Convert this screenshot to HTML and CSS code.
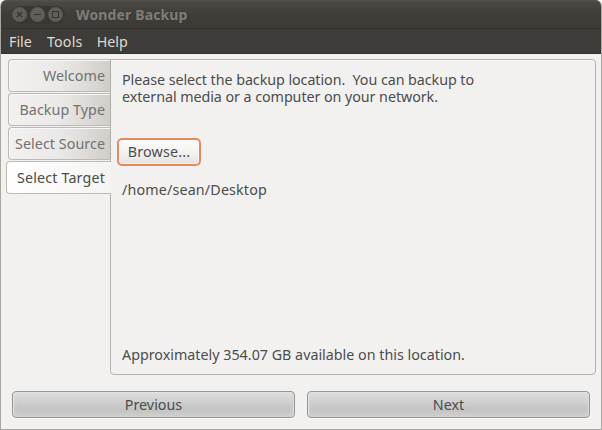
FILE: index.html
```html
<!DOCTYPE html>
<html lang="en">
<head>
<meta charset="utf-8">
<title>Wonder Backup</title>
<link rel="stylesheet" href="styles.css">
</head>
<body>
<div class="window">
  <header class="titlebar">
    <svg class="controls" width="54" height="18" viewBox="0 0 54 18">
      <rect x="0" y="0" width="54" height="18" rx="9" fill="#383732"/>
      <g fill="#605e58" stroke="#55534d">
        <circle cx="8.5" cy="8.5" r="7.2"/><circle cx="26.5" cy="8.5" r="7.2"/><circle cx="44.5" cy="8.5" r="7.2"/>
      </g>
      <g fill="none" stroke="#34332f">
        <path stroke-width="1.3" d="M6 6l5 5M11 6l-5 5"/>
        <path d="M23 8.5h7M41.500 5.500h6v6h-6z"/>
      </g>
    </svg>
    <h1 class="title">Wonder Backup</h1>
  </header>
  <nav class="menubar">
    <span class="menu">File</span><span class="menu tools">Tools</span><span class="menu">Help</span>
  </nav>
  <main class="content">
    <div class="tabs">
      <div class="tab">Welcome</div>
      <div class="tab">Backup Type</div>
      <div class="tab">Select Source</div>
      <div class="tab active">Select Target</div>
    </div>
    <section class="panel">
      <p class="intro">Please select the backup location.&nbsp; You can backup to<br>external media or a computer on your network.</p>
      <button class="browse">Browse...</button>
      <p class="path">/home/sean/Desktop</p>
      <p class="space">Approximately 354.07 GB available on this location.</p>
    </section>
  </main>
  <footer class="actions">
    <button class="action">Previous</button>
    <button class="action">Next</button>
  </footer>
</div>
</body>
</html>
```
FILE: styles.css
```css
* { box-sizing: border-box; }
body { margin: 0; background: #fff; }
.window {
  width: 602px; height: 430px;
  display: flex; flex-direction: column;
  border: 1px solid #aaa7a3; border-top: 0;
  border-radius: 6px 6px 0 0;
  overflow: hidden;
  background: #f2f1f0;
  color: #4c4c4c;
  font: 14.3px/17px "Noto Sans", sans-serif;
}
.titlebar {
  height: 28px; flex: none; margin: 0 -1px;
  display: flex; align-items: center;
  padding: 1px 0 0 11px;
  background: linear-gradient(#55534d 0, #4a4943 2px, #3e3d38 14px, #3c3b37 100%);
}
.title { margin: 1px 0 0 11px; font-size: 14px; line-height: 20px; font-weight: 700; letter-spacing: .14px; color: #807d78; }
.menubar {
  height: 26px; flex: none; margin: 0 -1px;
  display: flex; align-items: center; gap: 14px;
  padding: 1px 9px 0;
  border-top: 1px solid #33322e; border-bottom: 1px solid #32312d;
  background: #3d3c38; color: #dfdbd2;
}
.tools { margin-left: 1px; letter-spacing: .2px; }
.content { display: flex; height: 321px; flex: none; padding: 5px 5px 0; }
.tabs { width: 104px; flex: none; display: flex; flex-direction: column; align-items: flex-end; gap: 1px; z-index: 1; }
.tab {
  width: 103px; height: 33px; margin-right: -1px; padding: 0 5px 0 0;
  border: 1px solid #bcb9b6; border-right-color: #b0ada9;
  border-radius: 4px 0 0 4px;
  background: linear-gradient(90deg, #f2f1f0 0, #ebe9e7 50%, #d1cdc9 100%);
  box-shadow: inset 1px 1px #f8f7f7;
  color: #737170; text-align: right; line-height: 32px; letter-spacing: .05px; white-space: nowrap;
}
.tab.active {
  width: 105px; padding-right: 6px;
  border-right: 0;
  background: linear-gradient(90deg, #fff, #f5f4f3);
  color: #4c4c4c; letter-spacing: .16px; box-shadow: none;
}
.panel {
  flex: 1; height: 316px; display: flex; flex-direction: column; align-items: flex-start;
  padding: 11px 8px 11px 11px;
  border: 1px solid #b6b3af; border-radius: 0 4px 4px 4px;
  box-shadow: inset 0 1px #fbfbfa;
  white-space: nowrap;
}
p { margin: 0; }
.intro { letter-spacing: -.06px; }
.browse {
  width: 84px; height: 28px; margin: 33px 0 0 -5px; padding: 0 0 1px;
  font: inherit; color: inherit; letter-spacing: .2px;
  border: 2px solid #e9885f; border-radius: 5px;
  background: linear-gradient(#fcfcfb, #f1f0ef 60%, #e4e2e0);
  box-shadow: inset 0 0 0 1px #fff8;
}
.path { margin-top: 15px; letter-spacing: .15px; }
.space { margin-top: auto; }
.actions { display: flex; gap: 12px; padding: 16px 11px 0; }
.action {
  width: 283px; height: 27px; padding: 0;
  font: inherit; color: inherit;
  border: 1px solid #979593; border-radius: 4px;
  background: linear-gradient(#dedede, #c4c4c4 70%, #cbcbcb);
  box-shadow: inset 1px 1px #e4e4e4, inset -1px 0 #dadada, inset 0 0 6px #dededeaa, 0 1px #faf9f9;
}
```
